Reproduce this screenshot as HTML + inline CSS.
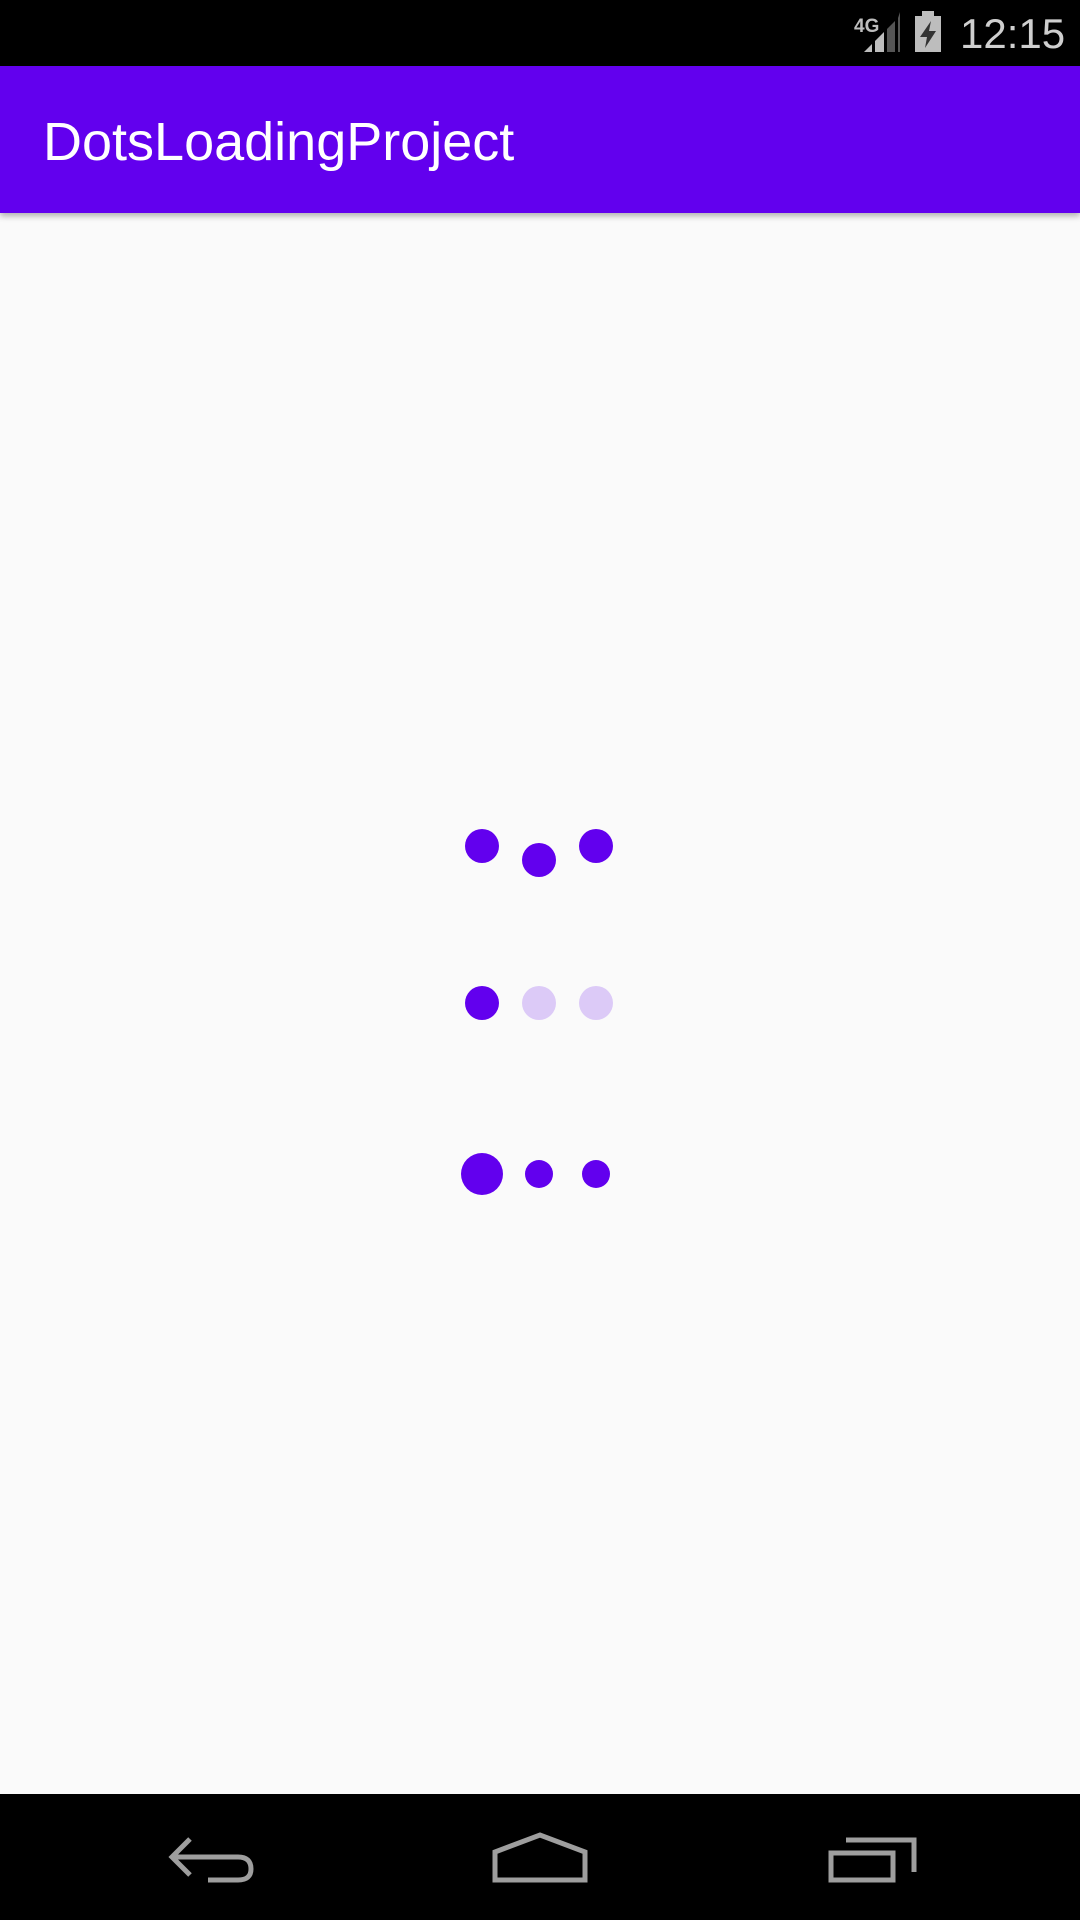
<!DOCTYPE html>
<html><head><style>
body{margin:0;width:1080px;height:1920px;background:#fafafa;position:relative;overflow:hidden;font-family:"Liberation Sans",sans-serif}
.sb{position:absolute;left:0;top:0;width:1080px;height:66px;background:#000}
.ab{position:absolute;left:0;top:66px;width:1080px;height:147px;background:#6200ee;box-shadow:0 3px 6px rgba(0,0,0,.3)}
.ab span{position:absolute;left:43px;top:45px;font-size:54px;color:#fff}
.nb{position:absolute;left:0;top:1794px;width:1080px;height:126px;background:#000}
.d{position:absolute;border-radius:50%;background:#6200ee}
</style></head><body>
<div class="sb">
<svg width="1080" height="66" style="position:absolute;left:0;top:0">
<text x="854" y="32" font-family="Liberation Sans" font-weight="bold" font-size="19" fill="#bdbdbd">4G</text>
<polygon points="864,52 872,44 872,52" fill="#bdbdbd"/>
<polygon points="875,41 884,32 884,52 875,52" fill="#bdbdbd"/>
<polygon points="887,29 895,21 895,52 887,52" fill="#555"/>
<polygon points="898,18 900,12 900,52 898,52" fill="#555"/>
<rect x="915" y="16" width="26" height="36" fill="#bdbdbd"/>
<rect x="922" y="11" width="12" height="6" fill="#bdbdbd"/>
<polygon points="931,21 920,37 927,37 925,48 936,31 929,31" fill="#333"/>
<text x="960" y="48" font-family="Liberation Sans" font-size="42" fill="#cfcfcf">12:15</text>
</svg>
</div>
<div class="ab"><span>DotsLoadingProject</span></div>
<div class="d" style="left:465px;top:829px;width:34px;height:34px"></div>
<div class="d" style="left:522px;top:843px;width:34px;height:34px"></div>
<div class="d" style="left:579px;top:829px;width:34px;height:34px"></div>
<div class="d" style="left:465px;top:986px;width:34px;height:34px"></div>
<div class="d" style="left:522px;top:986px;width:34px;height:34px;background:#dccaf7"></div>
<div class="d" style="left:579px;top:986px;width:34px;height:34px;background:#dccaf7"></div>
<div class="d" style="left:461px;top:1153px;width:42px;height:42px"></div>
<div class="d" style="left:525px;top:1160px;width:28px;height:28px"></div>
<div class="d" style="left:582px;top:1160px;width:28px;height:28px"></div>
<svg width="1080" height="1920" style="position:absolute;left:0;top:0" fill="none" stroke="#9e9e9e" stroke-width="5">
<path d="M190,1839 L172,1857 L190,1875 M173,1857 L238,1857 Q251,1857 251,1869 Q251,1880 238,1880 L208,1880"/>
<path d="M495,1880 L495,1852 L540,1835 L585,1852 L585,1880 Z"/>
<path d="M831,1880 L831,1853 L893,1853 L893,1880 Z M846,1840 L914,1840 L914,1872"/>
</svg>
<div class="nb" style="z-index:-1"></div>
</body></html>
